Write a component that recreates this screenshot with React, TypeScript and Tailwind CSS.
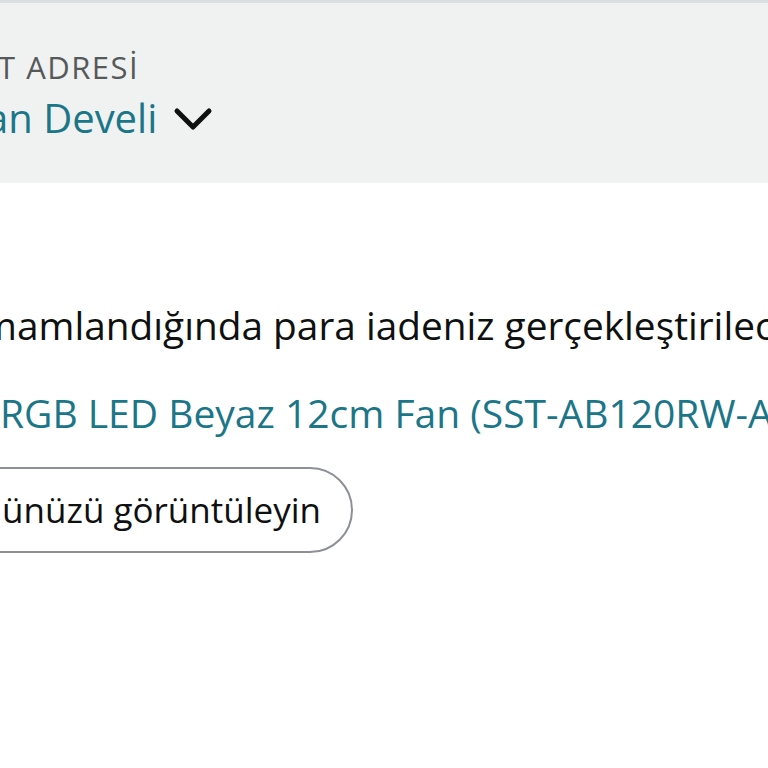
const font = { fontFamily: '"Open Sans", "Noto Sans", Arial, sans-serif' };

// Pushes the leading part of a line out past the left edge of the page,
// so the rest starts at x = 0 (the screenshot is a crop of a wider page).
function Clipped({ hidden, shown, className }: { hidden: string; shown: string; className: string }) {
  return (
    <div className={`flex whitespace-nowrap ${className}`}>
      <div className="w-0 shrink-0 flex justify-end">
        <span className="shrink-0">{hidden}</span>
      </div>
      <span className="shrink-0">{shown}</span>
    </div>
  );
}

export default function App() {
  return (
    <div className="w-[768px] h-[768px] overflow-hidden bg-white" style={font}>
      <div className="h-[183px] border-t-[3px] border-[#dcdfdf] bg-[#f0f2f2] pt-[46px]">
        <Clipped
          hidden="TESLİMA"
          shown="T ADRESİ"
          className="text-[31px] leading-[36px] tracking-[1.5px] text-[#565959] -ml-[2px]"
        />
        <div className="mt-[10px] flex items-center gap-[16px]">
          <Clipped
            hidden="Hakan Ceyh"
            shown="an Develi"
            className="text-[40px] leading-[46px] text-[#1b7688] -ml-[14px]"
          />
          <svg width="40" height="24" viewBox="0 0 40 24" className="shrink-0 mt-[2px]">
            <polyline points="4,4 20,20 36,4" fill="none" stroke="#0f1111" strokeWidth="5" strokeLinecap="round" strokeLinejoin="round" />
          </svg>
        </div>
      </div>

      <div className="pt-[119px]">
        <Clipped
          hidden="Ürün teslim alındığında ve iade işlemi ta"
          shown="mamlandığında para iadeniz gerçekleştirilecek."
          className="text-[38.8px] leading-[46px] text-[#0f1111] -ml-[19px]"
        />
        <Clipped
          hidden="SilverStone Air Blazer 120R A"
          shown="RGB LED Beyaz 12cm Fan (SST-AB120RW-ARGB)"
          className="mt-[42px] text-[39px] leading-[46px] text-[#1b7688]"
        />
        <div className="mt-[31px] w-[353px] flex justify-end">
          <button className="shrink-0 whitespace-nowrap rounded-full border-2 border-[#8d9096] bg-white py-[19px] pl-[30px] pr-[30px] text-[35px] leading-[44px] text-[#0f1111]">
            Ürününüzü görüntüleyin
          </button>
        </div>
      </div>
    </div>
  );
}
